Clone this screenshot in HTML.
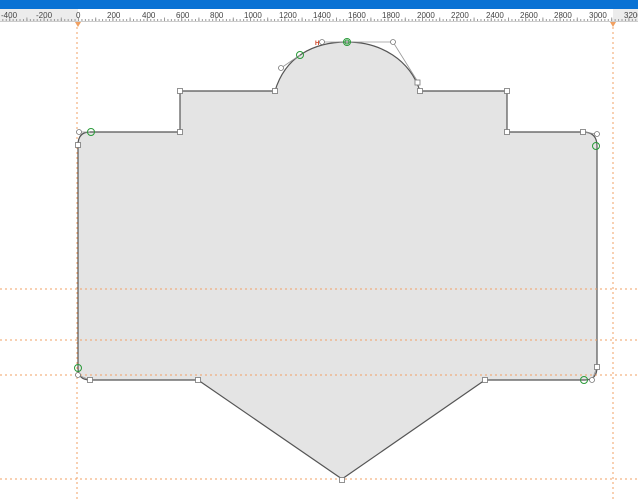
<!DOCTYPE html>
<html><head><meta charset="utf-8"><style>
html,body{margin:0;padding:0;background:#fff;width:638px;height:500px;overflow:hidden}
svg{display:block}
text{font-family:"Liberation Sans",sans-serif;font-size:8px;fill:#444}
</style></head><body>
<svg width="638" height="500" viewBox="0 0 638 500" xmlns="http://www.w3.org/2000/svg" shape-rendering="auto">
<defs>
<pattern id="tk" x="78" y="0" width="3.44" height="30" patternUnits="userSpaceOnUse">
<line x1="0.5" y1="19" x2="0.5" y2="21" stroke="#999" stroke-width="1"/>
</pattern>
<pattern id="tk2" x="78" y="0" width="17.2" height="30" patternUnits="userSpaceOnUse">
<line x1="0.5" y1="17.5" x2="0.5" y2="21" stroke="#999" stroke-width="1"/>
</pattern>
</defs>
<rect x="0" y="0" width="638" height="9" fill="#0a72d4"/>
<rect x="0" y="9" width="638" height="13" fill="#fff"/>
<rect x="0" y="9" width="78" height="13" fill="#ececec"/>
<rect x="613" y="9" width="25" height="13" fill="#ececec"/>
<rect x="0" y="9" width="638" height="13" fill="url(#tk)"/>
<rect x="0" y="9" width="638" height="13" fill="url(#tk2)"/>
<line x1="0" y1="21.5" x2="638" y2="21.5" stroke="#ccc"/>
<g>
<text x="1" y="18">-400</text><text x="36" y="18">-200</text><text x="76" y="18">0</text>
<text x="107" y="18">200</text><text x="142" y="18">400</text><text x="176" y="18">600</text>
<text x="210" y="18">800</text><text x="244" y="18">1000</text><text x="279" y="18">1200</text>
<text x="313" y="18">1400</text><text x="348" y="18">1600</text><text x="382" y="18">1800</text>
<text x="417" y="18">2000</text><text x="451" y="18">2200</text><text x="486" y="18">2400</text>
<text x="520" y="18">2600</text><text x="554" y="18">2800</text><text x="589" y="18">3000</text>
<text x="624" y="18">3200</text>
</g>
<path d="M75,22 L81,22 L78,27 Z" fill="#f0a060"/>
<path d="M610,22 L616,22 L613,27 Z" fill="#f0a060"/>

<path d="M78,145 Q78,132 90,132 L180,132 L180,91 L275,91 C285,57 313,42 347,42 C381,42 410,60 420,91 L507,91 L507,132 L583,132 Q597,132 597,146 L597,367 Q597,380 585,380 L485,380 L342,479 L198,380 L90,380 Q78,380 78,368 Z" fill="#e4e4e4" stroke="#555" stroke-width="1.2"/>

<g fill="#f2a066">
</g>
<g stroke="#f2a066" stroke-width="1" stroke-dasharray="2,3" fill="none" shape-rendering="crispEdges">
<line x1="77" y1="22" x2="77" y2="500"/>
<line x1="613" y1="22" x2="613" y2="500"/>
<line x1="0" y1="289" x2="638" y2="289"/>
<line x1="0" y1="340" x2="638" y2="340"/>
<line x1="0" y1="375" x2="638" y2="375"/>
<line x1="0" y1="479" x2="638" y2="479"/>
</g>

<g stroke="#999" stroke-width="0.8" fill="none">
<line x1="281" y1="68" x2="300" y2="55"/>
<line x1="322" y1="42" x2="347" y2="42"/>
<line x1="347" y1="42" x2="393" y2="42"/>
<line x1="393" y1="42" x2="418" y2="82"/>
<line x1="79" y1="132" x2="90" y2="132"/>
<line x1="597" y1="134" x2="583" y2="132"/>
<line x1="78" y1="375" x2="90" y2="380"/>
<line x1="592" y1="380" x2="597" y2="367"/>
</g>
<g fill="#fff" stroke="#777" stroke-width="0.8">
<rect x="177.5" y="88.5" width="5" height="5"/><rect x="177.5" y="129.5" width="5" height="5"/>
<rect x="272.5" y="88.5" width="5" height="5"/><rect x="417.5" y="88.5" width="5" height="5"/>
<rect x="415" y="80" width="5" height="5"/>
<rect x="504.5" y="88.5" width="5" height="5"/><rect x="504.5" y="129.5" width="5" height="5"/>
<rect x="580.5" y="129.5" width="5" height="5"/>
<rect x="75.5" y="142.5" width="5" height="5"/>
<rect x="594.5" y="364.5" width="5" height="5"/>
<rect x="87.5" y="377.5" width="5" height="5"/><rect x="195.5" y="377.5" width="5" height="5"/>
<rect x="482.5" y="377.5" width="5" height="5"/><rect x="339.5" y="477.5" width="5" height="5"/>
<circle cx="281" cy="68" r="2.5"/><circle cx="322" cy="42" r="2.5"/><circle cx="393" cy="42" r="2.5"/>
<circle cx="79" cy="132" r="2.5"/><circle cx="597" cy="134" r="2.5"/>
<circle cx="78" cy="375" r="2.5"/><circle cx="592" cy="380" r="2.5"/>
</g>
<g fill="none" stroke="#2a9a3a" stroke-width="1">
<circle cx="91" cy="132" r="3.5"/><circle cx="300" cy="55" r="3.5"/>
<circle cx="347" cy="42" r="3.5"/><circle cx="347" cy="42" r="2"/>
<circle cx="596" cy="146" r="3.5"/><circle cx="78" cy="368" r="3.5"/>
<circle cx="584" cy="380" r="3.5"/>
</g>
<text x="315" y="45" style="font-size:6px;fill:#d04020;font-weight:bold">H</text>
</svg>
</body></html>
